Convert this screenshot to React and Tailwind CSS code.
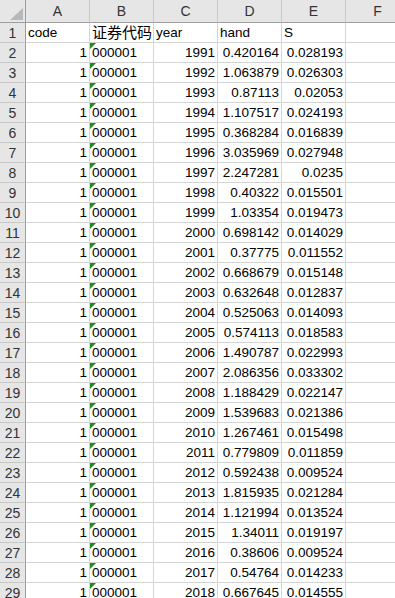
const ROWS = [
  [1991, '0.420164', '0.028193'],
  [1992, '1.063879', '0.026303'],
  [1993, '0.87113', '0.02053'],
  [1994, '1.107517', '0.024193'],
  [1995, '0.368284', '0.016839'],
  [1996, '3.035969', '0.027948'],
  [1997, '2.247281', '0.0235'],
  [1998, '0.40322', '0.015501'],
  [1999, '1.03354', '0.019473'],
  [2000, '0.698142', '0.014029'],
  [2001, '0.37775', '0.011552'],
  [2002, '0.668679', '0.015148'],
  [2003, '0.632648', '0.012837'],
  [2004, '0.525063', '0.014093'],
  [2005, '0.574113', '0.018583'],
  [2006, '1.490787', '0.022993'],
  [2007, '2.086356', '0.033302'],
  [2008, '1.188429', '0.022147'],
  [2009, '1.539683', '0.021386'],
  [2010, '1.267461', '0.015498'],
  [2011, '0.779809', '0.011859'],
  [2012, '0.592438', '0.009524'],
  [2013, '1.815935', '0.021284'],
  [2014, '1.121994', '0.013524'],
  [2015, '1.34011', '0.019197'],
  [2016, '0.38606', '0.009524'],
  [2017, '0.54764', '0.014233'],
  [2018, '0.667645', '0.014555'],
]

const COLS = ['A', 'B', 'C', 'D', 'E', 'F']

// ── cells ─────────────────────────────────────────────────────────────────────
function Cell({ children, right, tri }) {
  return (
    <div className={
      'relative h-[20px] border-r border-b border-[#d4d4d4] px-[2px] pt-[1px] flex items-center whitespace-nowrap overflow-visible ' +
      (right ? 'justify-end' : 'justify-start')
    }>
      {tri && (
        <svg className="absolute left-0 top-0" width="6" height="6" viewBox="0 0 6 6">
          <polygon points="0,0 6,0 0,6" fill="#1f8a1f" />
        </svg>
      )}
      {children}
    </div>
  )
}

function RowNum({ n }) {
  return (
    <div className="h-[20px] pt-[1px] bg-[#e6e6e6] border-r border-b border-r-[#9e9e9e] border-b-[#c8c8c8] flex items-center justify-center text-[14px] text-[#333]">
      {n}
    </div>
  )
}

export default function App() {
  return (
    <div
      className="w-[395px] h-[598px] overflow-hidden bg-white text-[13.5px] text-black"
      style={{ fontFamily: '"Liberation Sans", "Noto Sans CJK SC", sans-serif' }}>
      <div className="grid grid-cols-[26px_repeat(6,64px)] w-[410px]">
        {/* header */}
        <div className="relative h-[23px] bg-[#e6e6e6] border-r border-b border-[#9e9e9e]">
          <svg className="absolute left-[10px] top-[8px]" width="13" height="12" viewBox="0 0 13 12">
            <polygon points="13,0 13,12 0,12" fill="#b8b8b8" />
          </svg>
        </div>
        {COLS.map(c => (
          <div key={c}
            className="h-[23px] bg-[#e6e6e6] border-r border-b border-r-[#c8c8c8] border-b-[#9e9e9e] flex items-center justify-center text-[14px] text-[#333]">
            {c}
          </div>
        ))}

        {/* row 1 */}
        <RowNum n={1} />
        <Cell>code</Cell>
        <Cell><span className="text-[15px]">证券代码</span></Cell>
        <Cell>year</Cell>
        <Cell>hand</Cell>
        <Cell>S</Cell>
        <Cell />

        {ROWS.map(([yr, hand, s], i) => (
          <div key={yr} className="contents">
            <RowNum n={i + 2} />
            <Cell right>1</Cell>
            <Cell tri>000001</Cell>
            <Cell right>{yr}</Cell>
            <Cell right>{hand}</Cell>
            <Cell right>{s}</Cell>
            <Cell />
          </div>
        ))}
      </div>
    </div>
  )
}
